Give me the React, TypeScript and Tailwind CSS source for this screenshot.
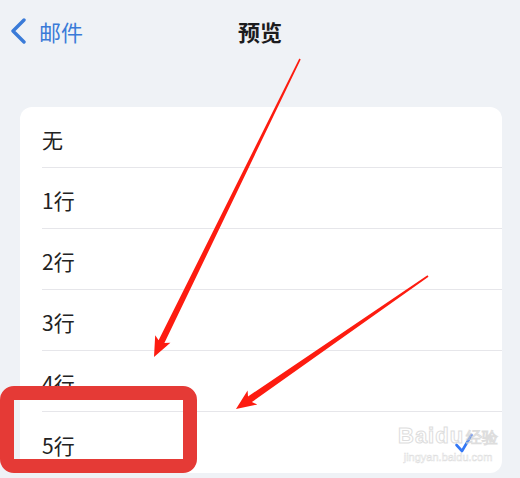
import React from "react";

const options = ["无", "1行", "2行", "3行", "4行", "5行"];
const selected = "5行";

type Pt = [number, number];

// tapered annotation arrow: thin tail, thicker near the head
function arrowPoints(from: Pt, to: Pt, tail: number, neck: number, headLen: number, headHalf: number) {
  const dx = to[0] - from[0];
  const dy = to[1] - from[1];
  const len = Math.hypot(dx, dy);
  const ux = dx / len;
  const uy = dy / len;
  const px = -uy;
  const py = ux;
  const bx = to[0] - ux * headLen;
  const by = to[1] - uy * headLen;
  const pts: Pt[] = [
    [from[0] + px * tail, from[1] + py * tail],
    [bx + px * neck, by + py * neck],
    [bx + px * headHalf - ux * 3, by + py * headHalf - uy * 3],
    [to[0], to[1]],
    [bx - px * headHalf - ux * 3, by - py * headHalf - uy * 3],
    [bx - px * neck, by - py * neck],
    [from[0] - px * tail, from[1] - py * tail],
  ];
  return pts.map((p) => `${p[0].toFixed(1)},${p[1].toFixed(1)}`).join(" ");
}

function Check() {
  return (
    <svg width="20" height="22" viewBox="0 0 20 22" fill="none">
      <path d="M2.5 13 L8 19 L17.5 3" stroke="#3478f6" strokeWidth="2.6" strokeLinecap="round" strokeLinejoin="round" />
    </svg>
  );
}

export default function App() {
  return (
    <div className="relative w-[520px] h-[478px] overflow-hidden bg-[#eff2f6] font-['Noto_Sans_CJK_SC','Noto_Sans',sans-serif]">
      {/* nav bar */}
      <div className="relative flex items-center h-[62px] px-[10px]">
        <div className="flex items-center gap-[12px] text-[#3a7bd8]">
          <svg width="17" height="26" viewBox="0 0 17 26" fill="none">
            <path d="M14 2 L3 13 L14 24" stroke="#3a7bd8" strokeWidth="3.4" strokeLinecap="round" strokeLinejoin="round" />
          </svg>
          <span className="text-[22px] leading-none">邮件</span>
        </div>
        <div className="absolute inset-x-0 flex justify-center pointer-events-none">
          <span className="text-[22px] font-bold text-[#1c1c1e] leading-none">预览</span>
        </div>
      </div>

      {/* options card */}
      <div className="mt-[45px] ml-[20px] w-[482px] bg-white rounded-[12px] pl-[22px]">
        {options.map((o, i) => (
          <div
            key={o}
            className={`flex items-center justify-between h-[61px] pr-[28px] ${i < options.length - 1 ? "border-b border-[#e6e6ea]" : ""}`}
          >
            <span className="text-[21px] text-[#222] leading-none pt-[5px]">{o}</span>
            {o === selected && <Check />}
          </div>
        ))}
      </div>

      {/* watermark */}
      <div className="absolute left-[398px] top-[425px] flex flex-col items-center text-white font-['Liberation_Sans',sans-serif] opacity-70">
        <div className="flex items-end [-webkit-text-stroke:1px_#d0d0d0]">
          <span className="text-[22px] font-bold leading-none tracking-[1px]">Baidu</span>
          <span className="text-[16px] leading-none ml-[2px] mb-[1px]">经验</span>
        </div>
        <span className="text-[11px] leading-none mt-[5px] [-webkit-text-stroke:0.5px_#d0d0d0]">jingyan.baidu.com</span>
      </div>

      {/* annotations */}
      <div className="absolute left-0 top-[386px] w-[197px] h-[87px] border-[14px] border-[#e53a36] rounded-[14px]" />
      <svg className="absolute inset-0 pointer-events-none" width="520" height="478">
        <polygon points={arrowPoints([300, 59], [154, 357], 0.8, 3.2, 17, 8.5)} fill="#fd1c10" />
        <polygon points={arrowPoints([428, 276], [236, 409], 0.8, 3.4, 17, 8.5)} fill="#fd1c10" />
      </svg>
    </div>
  );
}
